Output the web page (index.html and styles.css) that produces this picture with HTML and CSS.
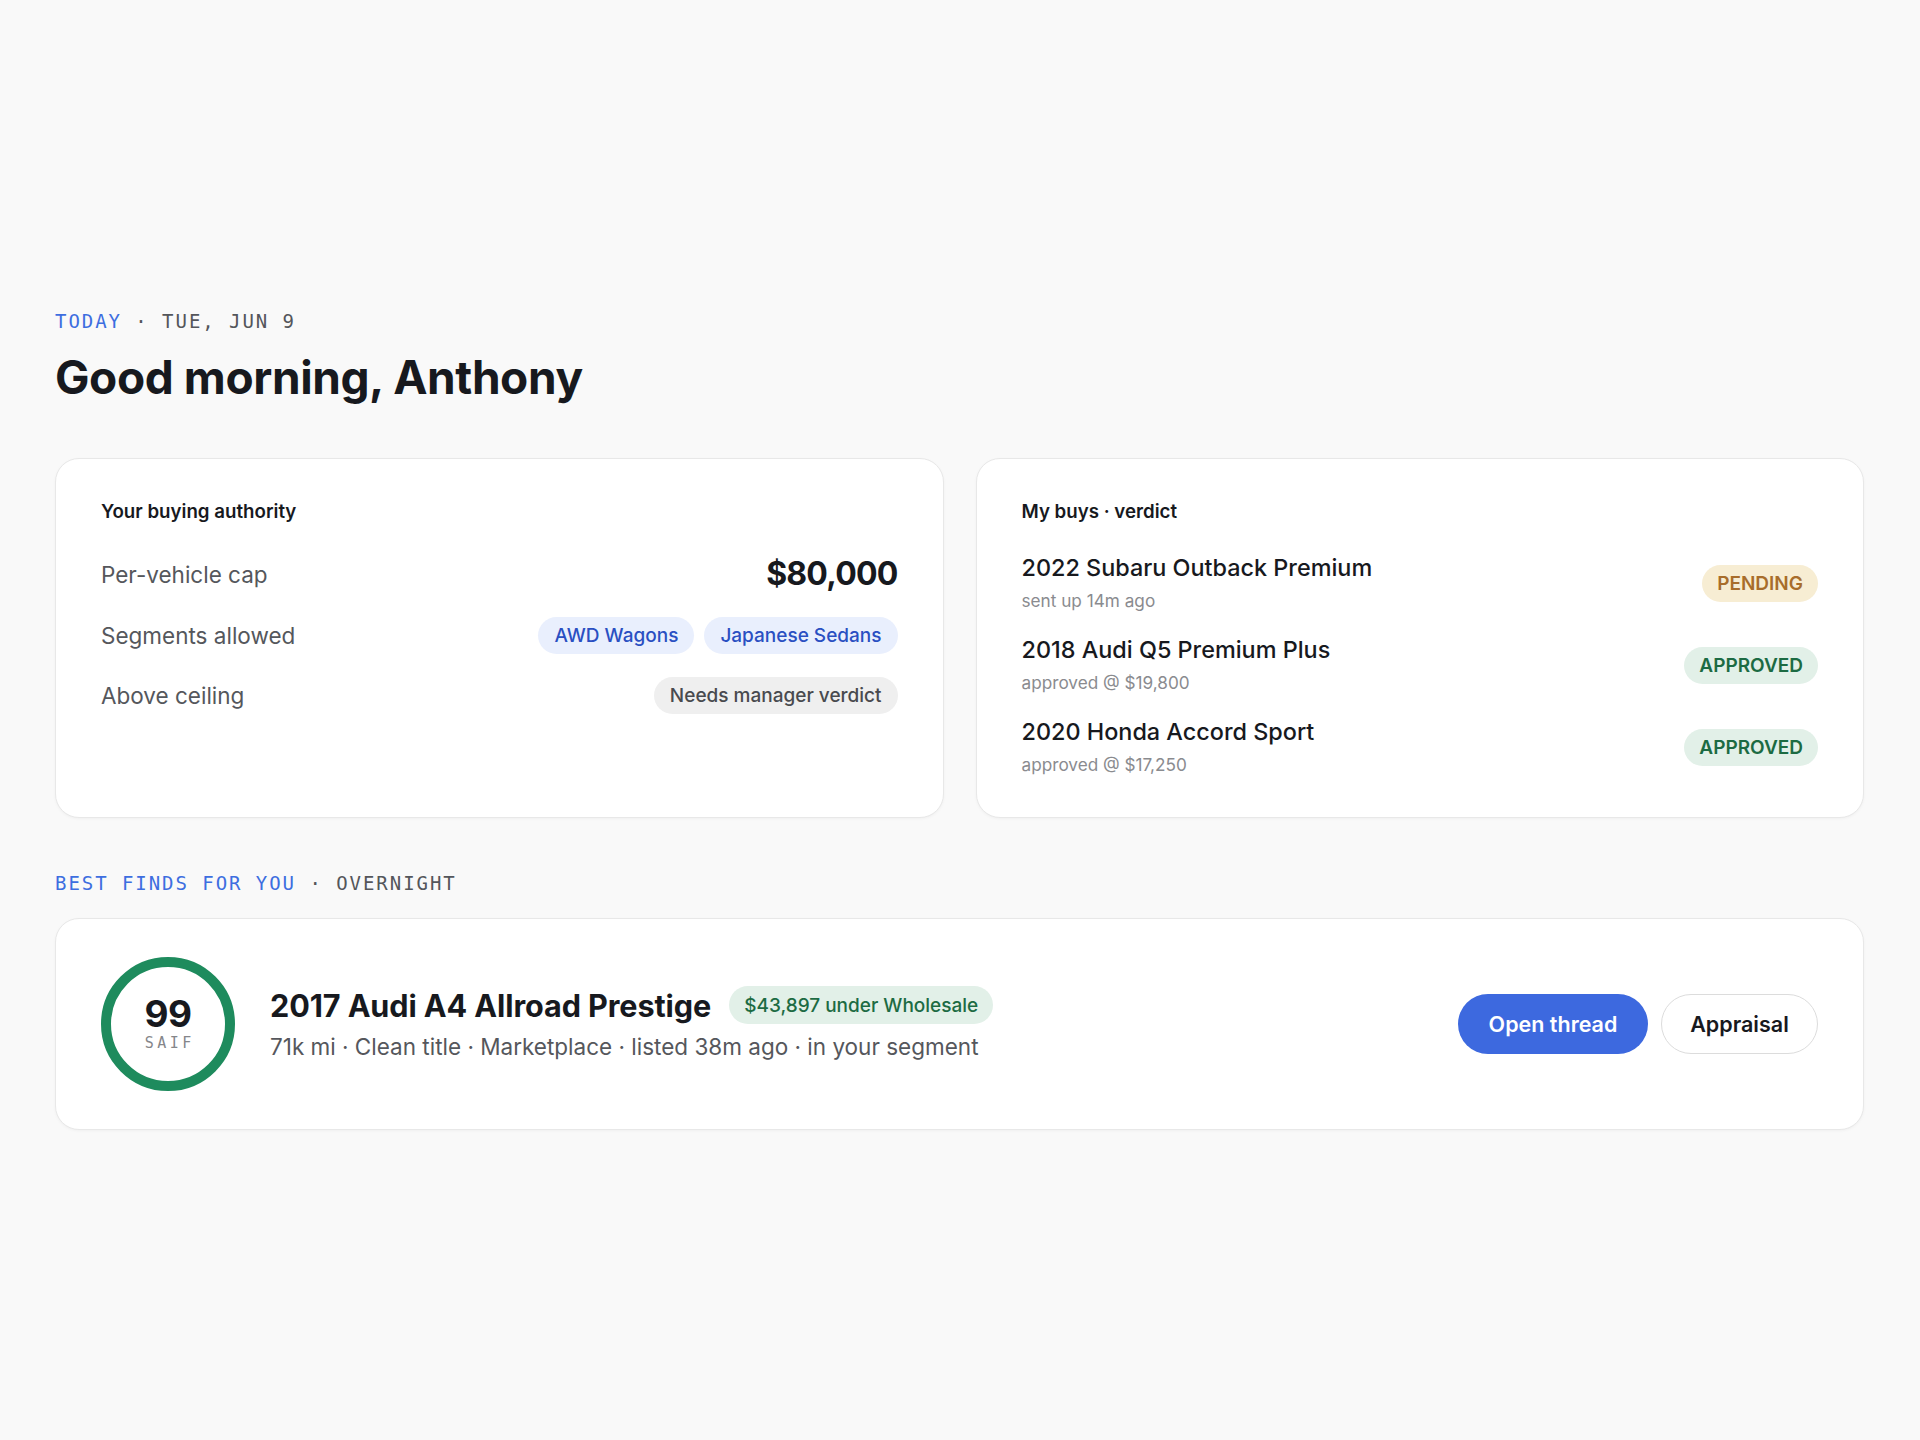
FILE: index.html
```html
<!DOCTYPE html>
<html lang="en">
<head>
<meta charset="utf-8">
<title>Today</title>
<link rel="stylesheet" href="styles.css">
</head>
<body>
<main class="page">
  <div class="eyebrow"><span class="accent">TODAY</span> · TUE, JUN 9</div>
  <h1 class="greeting">Good morning, Anthony</h1>

  <section class="cards">
    <div class="card">
      <div class="card-title">Your buying authority</div>
      <div class="rows">
        <div class="row">
          <span class="row-label">Per-vehicle cap</span>
          <span class="cap">$80,000</span>
        </div>
        <div class="row">
          <span class="row-label">Segments allowed</span>
          <span class="chips">
            <span class="chip chip-blue">AWD Wagons</span>
            <span class="chip chip-blue">Japanese Sedans</span>
          </span>
        </div>
        <div class="row">
          <span class="row-label">Above ceiling</span>
          <span class="chip chip-gray">Needs manager verdict</span>
        </div>
      </div>
    </div>

    <div class="card">
      <div class="card-title">My buys · verdict</div>
      <div class="buys">
        <div class="buy">
          <div class="buy-text">
            <div class="buy-name">2022 Subaru Outback Premium</div>
            <div class="buy-sub">sent up 14m ago</div>
          </div>
          <span class="badge badge-pending">PENDING</span>
        </div>
        <div class="buy">
          <div class="buy-text">
            <div class="buy-name">2018 Audi Q5 Premium Plus</div>
            <div class="buy-sub">approved @ $19,800</div>
          </div>
          <span class="badge badge-approved">APPROVED</span>
        </div>
        <div class="buy">
          <div class="buy-text">
            <div class="buy-name">2020 Honda Accord Sport</div>
            <div class="buy-sub">approved @ $17,250</div>
          </div>
          <span class="badge badge-approved">APPROVED</span>
        </div>
      </div>
    </div>
  </section>

  <div class="eyebrow section-label"><span class="accent">BEST FINDS FOR YOU</span> · OVERNIGHT</div>

  <section class="card find">
    <div class="score">
      <span class="score-num">99</span>
      <span class="score-label">SAIF</span>
    </div>
    <div class="find-text">
      <div class="find-head">
        <span class="find-name">2017 Audi A4 Allroad Prestige</span>
        <span class="deal">$43,897 under Wholesale</span>
      </div>
      <div class="find-sub">71k mi · Clean title · Marketplace · listed 38m ago · in your segment</div>
    </div>
    <div class="actions">
      <button class="btn btn-primary">Open thread</button>
      <button class="btn btn-outline">Appraisal</button>
    </div>
  </section>
</main>
</body>
</html>
```

FILE: styles.css
```css
* { box-sizing: border-box; }

html, body {
  margin: 0;
  background: #f9f9f9;
}

body {
  font-family: Inter, "Noto Sans", "Liberation Sans", sans-serif;
  color: #17191e;
}

.page {
  padding: 309px 56px 200px 55px;
}

.eyebrow {
  font-family: "DejaVu Sans Mono", "Liberation Mono", monospace;
  font-size: 19px;
  line-height: 24px;
  letter-spacing: 1.95px;
  color: #54565b;
}

.accent { color: #3d6ee0; }

.greeting {
  margin: 18px 0 0;
  font-size: 46px;
  line-height: 53px;
  font-weight: 700;
  letter-spacing: -0.4px;
  color: #17191e;
}

.cards {
  margin-top: 54px;
  display: grid;
  grid-template-columns: 1fr 1fr;
  gap: 32px;
}

.card {
  background: #ffffff;
  border: 1px solid #e8e8e8;
  border-radius: 24px;
  box-shadow: 0 1px 3px rgba(0, 0, 0, 0.04);
  padding: 41px 45px;
}

.card-title {
  font-size: 18.7px;
  line-height: 24px;
  font-weight: 600;
  color: #17191e;
}

.rows {
  margin-top: 30px;
  display: flex;
  flex-direction: column;
  gap: 23px;
}

.row {
  display: flex;
  align-items: center;
  justify-content: space-between;
  min-height: 37px;
}

.row-label {
  font-size: 22.5px;
  color: #55575c;
}

.cap {
  font-size: 32px;
  line-height: 40px;
  font-weight: 700;
  letter-spacing: -0.8px;
  color: #17191e;
}

.chips {
  display: flex;
  gap: 10px;
}

.chip {
  display: inline-flex;
  align-items: center;
  height: 37px;
  padding: 0 16px;
  border-radius: 19px;
  font-size: 19px;
  font-weight: 500;
}

.chip-blue {
  background: #e9effd;
  color: #2a4fc2;
}

.chip-gray {
  background: #efefef;
  color: #494a4e;
}

.buys {
  margin-top: 30px;
  display: flex;
  flex-direction: column;
  gap: 24px;
}

.buy {
  display: flex;
  align-items: center;
  justify-content: space-between;
}

.buy-name {
  font-size: 23.4px;
  line-height: 28px;
  font-weight: 500;
  color: #17191e;
}

.buy-sub {
  margin-top: 8px;
  font-size: 17.2px;
  line-height: 22px;
  color: #8a8b8f;
}

.badge {
  display: inline-flex;
  align-items: center;
  height: 37px;
  padding: 0 15px;
  border-radius: 19px;
  font-size: 19px;
  font-weight: 600;
}

.badge-pending {
  background: #f7edd3;
  color: #a86d2b;
}

.badge-approved {
  background: #e2f0e8;
  color: #1c6b43;
}

.section-label {
  margin-top: 53px;
}

.find {
  margin-top: 23px;
  display: flex;
  align-items: center;
  padding: 38px 45px;
}

.score {
  width: 134px;
  height: 134px;
  flex: none;
  border: 10px solid #1e8b5d;
  border-radius: 50%;
  display: flex;
  flex-direction: column;
  align-items: center;
  justify-content: center;
}

.score-num {
  font-size: 37px;
  line-height: 36px;
  font-weight: 700;
  color: #17191e;
  letter-spacing: -0.5px;
}

.score-label {
  margin-top: 2px;
  font-family: "DejaVu Sans Mono", "Liberation Mono", monospace;
  font-size: 15px;
  line-height: 18px;
  letter-spacing: 3.5px;
  padding-left: 3.5px;
  color: #85868a;
}

.find-text {
  margin-left: 35px;
  flex: 1;
}

.find-head {
  display: flex;
  align-items: center;
  gap: 18px;
}

.find-name {
  font-size: 30.6px;
  font-weight: 700;
  letter-spacing: -0.1px;
  color: #17191e;
}

.deal {
  display: inline-flex;
  align-items: center;
  height: 38px;
  padding: 0 15px;
  border-radius: 19px;
  background: #e2f0e8;
  color: #1c6b43;
  font-size: 19px;
  font-weight: 500;
}

.find-sub {
  margin-top: 8px;
  font-size: 22.5px;
  line-height: 30px;
  color: #55575c;
}

.actions {
  display: flex;
  gap: 13px;
}

.btn {
  height: 60px;
  border-radius: 30px;
  font-family: inherit;
  font-size: 21.5px;
  font-weight: 600;
  cursor: pointer;
}

.btn-primary {
  width: 190px;
  background: #3d69df;
  color: #ffffff;
  border: none;
}

.btn-outline {
  width: 157px;
  background: #ffffff;
  color: #17191e;
  border: 1.5px solid #dcdcdc;
}
```
